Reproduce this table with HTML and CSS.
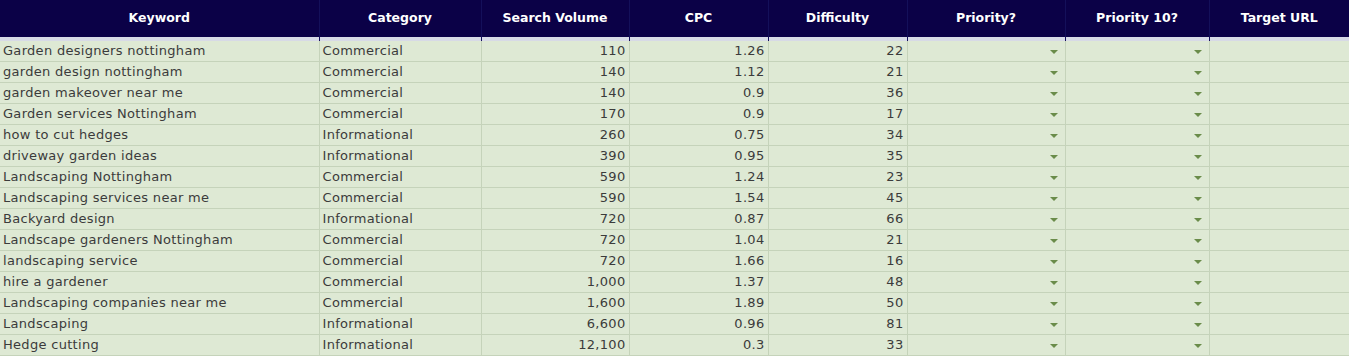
FILE: index.html
```html
<!DOCTYPE html>
<html>
<head>
<meta charset="utf-8">
<link rel="stylesheet" href="styles.css">
</head>
<body>
<table class="sheet">
  <colgroup>
    <col class="c-kw"><col class="c-cat"><col class="c-sv"><col class="c-cpc"><col class="c-diff"><col class="c-p"><col class="c-p10"><col class="c-url">
  </colgroup>
  <thead>
    <tr>
      <th>Keyword</th><th>Category</th><th>Search Volume</th><th>CPC</th><th>Difficulty</th><th>Priority?</th><th>Priority 10?</th><th>Target URL</th>
    </tr>
  </thead>
  <tbody>
    <tr><td>Garden designers nottingham</td><td>Commercial</td><td class="num">110</td><td class="num">1.26</td><td class="num">22</td><td class="dd"><span class="arrow"></span></td><td class="dd"><span class="arrow"></span></td><td></td></tr>
    <tr><td>garden design nottingham</td><td>Commercial</td><td class="num">140</td><td class="num">1.12</td><td class="num">21</td><td class="dd"><span class="arrow"></span></td><td class="dd"><span class="arrow"></span></td><td></td></tr>
    <tr><td>garden makeover near me</td><td>Commercial</td><td class="num">140</td><td class="num">0.9</td><td class="num">36</td><td class="dd"><span class="arrow"></span></td><td class="dd"><span class="arrow"></span></td><td></td></tr>
    <tr><td>Garden services Nottingham</td><td>Commercial</td><td class="num">170</td><td class="num">0.9</td><td class="num">17</td><td class="dd"><span class="arrow"></span></td><td class="dd"><span class="arrow"></span></td><td></td></tr>
    <tr><td>how to cut hedges</td><td>Informational</td><td class="num">260</td><td class="num">0.75</td><td class="num">34</td><td class="dd"><span class="arrow"></span></td><td class="dd"><span class="arrow"></span></td><td></td></tr>
    <tr><td>driveway garden ideas</td><td>Informational</td><td class="num">390</td><td class="num">0.95</td><td class="num">35</td><td class="dd"><span class="arrow"></span></td><td class="dd"><span class="arrow"></span></td><td></td></tr>
    <tr><td>Landscaping Nottingham</td><td>Commercial</td><td class="num">590</td><td class="num">1.24</td><td class="num">23</td><td class="dd"><span class="arrow"></span></td><td class="dd"><span class="arrow"></span></td><td></td></tr>
    <tr><td>Landscaping services near me</td><td>Commercial</td><td class="num">590</td><td class="num">1.54</td><td class="num">45</td><td class="dd"><span class="arrow"></span></td><td class="dd"><span class="arrow"></span></td><td></td></tr>
    <tr><td>Backyard design</td><td>Informational</td><td class="num">720</td><td class="num">0.87</td><td class="num">66</td><td class="dd"><span class="arrow"></span></td><td class="dd"><span class="arrow"></span></td><td></td></tr>
    <tr><td>Landscape gardeners Nottingham</td><td>Commercial</td><td class="num">720</td><td class="num">1.04</td><td class="num">21</td><td class="dd"><span class="arrow"></span></td><td class="dd"><span class="arrow"></span></td><td></td></tr>
    <tr><td>landscaping service</td><td>Commercial</td><td class="num">720</td><td class="num">1.66</td><td class="num">16</td><td class="dd"><span class="arrow"></span></td><td class="dd"><span class="arrow"></span></td><td></td></tr>
    <tr><td>hire a gardener</td><td>Commercial</td><td class="num">1,000</td><td class="num">1.37</td><td class="num">48</td><td class="dd"><span class="arrow"></span></td><td class="dd"><span class="arrow"></span></td><td></td></tr>
    <tr><td>Landscaping companies near me</td><td>Commercial</td><td class="num">1,600</td><td class="num">1.89</td><td class="num">50</td><td class="dd"><span class="arrow"></span></td><td class="dd"><span class="arrow"></span></td><td></td></tr>
    <tr><td>Landscaping</td><td>Informational</td><td class="num">6,600</td><td class="num">0.96</td><td class="num">81</td><td class="dd"><span class="arrow"></span></td><td class="dd"><span class="arrow"></span></td><td></td></tr>
    <tr><td>Hedge cutting</td><td>Informational</td><td class="num">12,100</td><td class="num">0.3</td><td class="num">33</td><td class="dd"><span class="arrow"></span></td><td class="dd"><span class="arrow"></span></td><td></td></tr>
  </tbody>
</table>
</body>
</html>
```
FILE: styles.css
```css
html, body {
  margin: 0;
  padding: 0;
  background: #ffffff;
}
.sheet {
  border-collapse: collapse;
  table-layout: fixed;
  width: 1349px;
  font-family: "DejaVu Sans", sans-serif;
  font-size: 13px;
  letter-spacing: 0.3px;
  color: #3b3b3b;
}
.c-kw { width: 319px; }
.c-cat { width: 162px; }
.c-sv { width: 148px; }
.c-cpc { width: 139px; }
.c-diff { width: 139px; }
.c-p { width: 158px; }
.c-p10 { width: 144px; }
.c-url { width: 140px; }

.sheet thead th {
  background: #0b0147;
  color: #ffffff;
  font-weight: bold;
  font-size: 12.5px;
  letter-spacing: 0;
  height: 35px;
  padding: 0 0 6px 0;
  text-align: center;
  border-right: 1px solid #14105a;
  box-shadow: inset 0 -4px 0 #d7dae6;
  box-sizing: content-box;
}
.sheet thead th:last-child { border-right: none; }

.sheet tbody td {
  background: #dee9d4;
  height: 20px;
  padding: 0 3px;
  border-right: 1px solid #c5d3ba;
  border-bottom: 1px solid #c5d3ba;
  white-space: nowrap;
  overflow: hidden;
  line-height: 20px;
}
.sheet tbody td:last-child { border-right: none; }
.sheet tbody td.num { text-align: right; }
.sheet tbody td.dd {
  text-align: right;
  padding-right: 7px;
}
.arrow {
  display: inline-block;
  width: 0;
  height: 0;
  border-left: 4px solid transparent;
  border-right: 4px solid transparent;
  border-top: 4px solid #6a8c4a;
  vertical-align: middle;
}
```
